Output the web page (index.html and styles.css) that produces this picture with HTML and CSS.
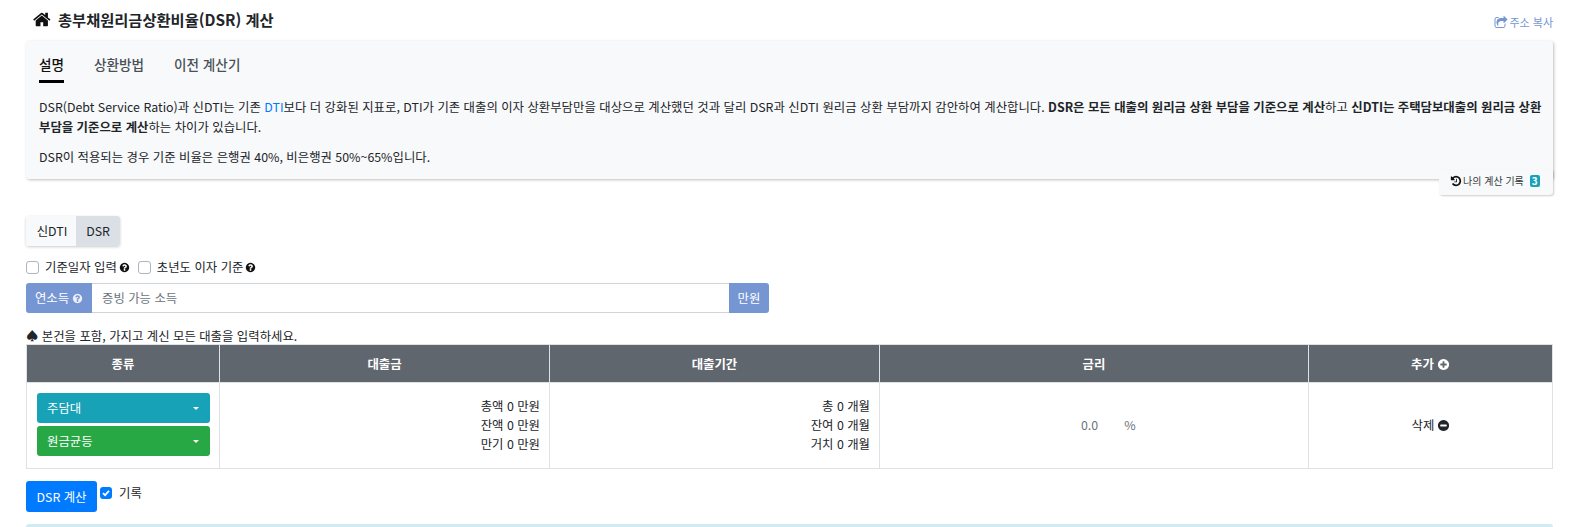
FILE: index.html
```html
<!DOCTYPE html>
<html lang="ko">
<head>
<meta charset="utf-8">
<title>총부채원리금상환비율(DSR) 계산</title>
<link rel="stylesheet" href="styles.css">
</head>
<body>
<svg class="defs" width="0" height="0" aria-hidden="true">
<symbol id="i-home" viewBox="0 0 1792 1792"><path d="M1408 992v480q0 26-19 45t-45 19h-384v-384h-256v384h-384q-26 0-45-19t-19-45v-480q0-1 .5-3t.5-3l575-474 575 474q1 2 1 6zm223-69l-62 74q-8 9-21 11h-3q-13 0-21-7l-692-577-692 577q-12 8-24 7-13-2-21-11l-62-74q-8-10-7-23.500t11-21.500l719-599q32-26 76-26t76 26l244 204v-195q0-14 9-23t23-9h192q14 0 23 9t9 23v408l219 182q10 8 11 21.500t-7 23.500z"/></symbol>
<symbol id="i-help" viewBox="0 0 1792 1792"><path d="M1024 1376v-192q0-14-9-23t-23-9h-192q-14 0-23 9t-9 23v192q0 14 9 23t23 9h192q14 0 23-9t9-23zm256-672q0-88-55.500-163t-138.500-116-170-41q-243 0-371 213-15 24 8 42l132 100q7 6 19 6 16 0 25-12 53-68 86-92 34-24 86-24 48 0 85.500 26t37.500 59q0 38-20 61t-68 45q-63 28-115.500 86.500t-52.500 125.500v36q0 14 9 23t23 9h192q14 0 23-9t9-23q0-19 21.500-49.500t54.500-49.500q32-18 49-28.500t46-35 44.500-48 28-60.500 12.500-81zm384 192q0 209-103 385.500t-279.500 279.500-385.500 103-385.500-103-279.500-279.500-103-385.500 103-385.500 279.500-279.500 385.500-103 385.500 103 279.500 279.500 103 385.500z"/></symbol>
<symbol id="i-plus" viewBox="0 0 1792 1792"><path d="M1344 960v-128q0-26-19-45t-45-19h-256v-256q0-26-19-45t-45-19h-128q-26 0-45 19t-19 45v256h-256q-26 0-45 19t-19 45v128q0 26 19 45t45 19h256v256q0 26 19 45t45 19h128q26 0 45-19t19-45v-256h256q26 0 45-19t19-45zm320-64q0 209-103 385.500t-279.500 279.500-385.500 103-385.500-103-279.500-279.500-103-385.500 103-385.500 279.500-279.500 385.500-103 385.500 103 279.500 279.500 103 385.500z"/></symbol>
<symbol id="i-minus" viewBox="0 0 1792 1792"><path d="M1344 960v-128q0-26-19-45t-45-19h-768q-26 0-45 19t-19 45v128q0 26 19 45t45 19h768q26 0 45-19t19-45zm320-64q0 209-103 385.500t-279.500 279.500-385.500 103-385.500-103-279.500-279.500-103-385.500 103-385.500 279.500-279.500 385.500-103 385.500 103 279.500 279.500 103 385.500z"/></symbol>
<symbol id="i-history" viewBox="0 0 1792 1792"><path d="M1664 896q0 156-61 298t-164 245-245 164-298 61q-172 0-327-72.500t-264-204.500q-7-10-6.500-22.500t8.500-20.500l137-138q10-9 25-9 16 2 23 12 73 95 179 147t225 52q104 0 198.500-40.500t163.500-109.500 109.500-163.500 40.500-198.500-40.500-198.500-109.500-163.500-163.500-109.500-198.500-40.500q-98 0-188 35.500t-160 101.500l137 138q31 30 14 69-17 40-59 40h-448q-26 0-45-19t-19-45v-448q0-42 40-59 39-17 69 14l130 129q107-101 244.500-156.500t284.500-55.500q156 0 298 61t245 164 164 245 61 298zm-640-288v448q0 14-9 23t-23 9h-320q-14 0-23-9t-9-23v-64q0-14 9-23t23-9h224v-352q0-14 9-23t23-9h64q14 0 23 9t9 23z"/></symbol>
<symbol id="i-share" viewBox="0 0 1792 1792"><path d="M1472 989v259q0 119-84.500 203.500t-203.500 84.500h-832q-119 0-203.500-84.500t-84.500-203.500v-832q0-119 84.500-203.500t203.500-84.500h255q13 0 22.500 9.500t9.500 22.500q0 27-26 32-77 26-133 60-10 4-16 4h-112q-66 0-113 47t-47 113v832q0 66 47 113t113 47h832q66 0 113-47t47-113v-214q0-19 18-29 28-13 54-37 16-16 35-8 21 9 21 29zm237-496l-384 384q-18 19-45 19-12 0-25-5-39-17-39-59v-192h-160q-323 0-438 131-119 137-74 473 3 23-20 34-8 2-12 2-16 0-26-13-10-14-21-31t-39.500-68.500-49.500-99.500-38.500-114-17.500-122q0-49 3.500-91t14-90 28-88 47-81.500 68.500-74 94.500-61.500 124.500-48.500 159.500-30.500 196.500-11h160v-192q0-42 39-59 13-5 25-5 26 0 45 19l384 384q19 19 19 45t-19 45z"/></symbol>
</svg>
<main class="page">
  <header class="title-row">
    <h1 class="title"><svg class="icon icon-home"><use href="#i-home"/></svg>총부채원리금상환비율(DSR) 계산</h1>
    <a class="copy" href="#"><svg class="icon icon-share"><use href="#i-share"/></svg>주소 복사</a>
  </header>

  <section class="card">
    <nav class="tabs">
      <a class="tab active" href="#">설명</a>
      <a class="tab" href="#">상환방법</a>
      <a class="tab" href="#">이전 계산기</a>
    </nav>
    <p class="para para-first">DSR(Debt Service Ratio)과 신DTI는 기존 <a class="link" href="#">DTI</a>보다 더 강화된 지표로, DTI가 기존 대출의 이자 상환부담만을 대상으로 계산했던 것과 달리 DSR과 신DTI 원리금 상환 부담까지 감안하여 계산합니다. <b>DSR은 모든 대출의 원리금 상환 부담을 기준으로 계산</b>하고 <b>신DTI는 주택담보대출의 원리금 상환 부담을 기준으로 계산</b>하는 차이가 있습니다.</p>
    <p class="para">DSR이 적용되는 경우 기준 비율은 은행권 40%, 비은행권 50%~65%입니다.</p>
    <a class="history" href="#"><svg class="icon icon-history"><use href="#i-history"/></svg>나의 계산 기록<span class="badge">3</span></a>
  </section>

  <div class="toggle">
    <button class="toggle-btn" type="button">신DTI</button>
    <button class="toggle-btn on" type="button">DSR</button>
  </div>

  <div class="checks">
    <label class="check"><span class="box"></span>기준일자 입력<svg class="icon icon-help"><use href="#i-help"/></svg></label>
    <label class="check"><span class="box"></span>초년도 이자 기준<svg class="icon icon-help"><use href="#i-help"/></svg></label>
  </div>

  <div class="input-group">
    <span class="addon addon-left">연소득<svg class="icon icon-help-light"><use href="#i-help"/></svg></span>
    <input class="field" type="text" placeholder="증빙 가능 소득">
    <span class="addon addon-right">만원</span>
  </div>

  <p class="note">♠ 본건을 포함, 가지고 계신 모든 대출을 입력하세요.</p>

  <table class="loans">
    <colgroup>
      <col class="c1"><col class="c2"><col class="c3"><col class="c4"><col class="c5">
    </colgroup>
    <thead>
      <tr>
        <th>종류</th>
        <th>대출금</th>
        <th>대출기간</th>
        <th>금리</th>
        <th>추가<svg class="icon icon-round"><use href="#i-plus"/></svg></th>
      </tr>
    </thead>
    <tbody>
      <tr>
        <td class="cell-kind">
          <button class="select teal" type="button">주담대<i class="caret"></i></button>
          <button class="select green" type="button">원금균등<i class="caret"></i></button>
        </td>
        <td class="cell-num">총액 0 만원<br>잔액 0 만원<br>만기 0 만원</td>
        <td class="cell-num">총 0 개월<br>잔여 0 개월<br>거치 0 개월</td>
        <td class="cell-rate"><span class="rate"><span class="rate-val">0.0</span><span>%</span></span></td>
        <td class="cell-del">삭제<svg class="icon icon-round"><use href="#i-minus"/></svg></td>
      </tr>
    </tbody>
  </table>

  <div class="actions">
    <button class="primary" type="button">DSR 계산</button>
    <label class="record"><span class="box-on"><svg viewBox="0 0 12 12"><path d="M3 6.200 5.100 8.200 9 3.900" fill="none" stroke="#fff" stroke-width="1.800"/></svg></span>기록</label>
  </div>

  <div class="alert"></div>
</main>
</body>
</html>
```
FILE: styles.css
```css
* { box-sizing: border-box; }
html, body { height: 527px; overflow: hidden; }
body {
  margin: 0;
  background: #fff;
  color: #212529;
  font-family: "Noto Sans CJK KR", "Noto Sans", sans-serif;
  font-size: 12.380px;
  line-height: 20px;
}
.defs { position: absolute; }
.page { width: 1527px; margin-left: 26px; }
.icon { display: inline-block; fill: currentColor; vertical-align: -2px; }

.title-row { display: flex; justify-content: space-between; height: 41px; }
.title { margin: 8px 0 0 7px; font-size: 15.300px; line-height: 22px; font-weight: 700; color: #212529; }
.icon-home { width: 19px; height: 19px; margin-right: 6px; vertical-align: -3px; color: #111; }
.copy { margin-top: 12px; color: #7596d3; font-size: 11px; line-height: 20px; text-decoration: none; }
.icon-share { width: 14px; height: 14px; margin-right: 1px; vertical-align: -3px; }

.card {
  position: relative;
  height: 138px;
  padding: 0 8px 0 13px;
  background: #f8f9fa;
  border-radius: 3px;
  box-shadow: 1px 1px 3px rgba(0, 0, 0, .25);
}
.tabs { display: flex; gap: 30px; height: 42px; padding-top: 12px; }
.tab { height: 30px; font-size: 13.600px; line-height: 22px; font-weight: 500; color: #495057; text-decoration: none; }
.tab.active { color: #111; border-bottom: 3px solid #000; }
.para { margin: 0 0 10px; line-height: 19.800px; word-break: keep-all; }
.para-first { padding-top: 15px; }
.link { color: #007bff; text-decoration: none; }
b { font-weight: 700; }
.history {
  position: absolute;
  right: 0;
  bottom: -16px;
  display: flex;
  align-items: center;
  width: 114px;
  height: 25px;
  padding: 0 0 3px 11px;
  background: #f8f9fa;
  border-radius: 0 0 3px 3px;
  box-shadow: 1px 1px 2px rgba(0, 0, 0, .2);
  color: #343a40;
  font-size: 10px;
  text-decoration: none;
}
.icon-history { width: 12px; height: 12px; margin-right: 1px; color: #111; }
.badge {
  width: 10px;
  height: 12px;
  margin-left: 6px;
  border-radius: 2px;
  background: #17a2b8;
  color: #fff;
  font-size: 10px;
  line-height: 12px;
  font-weight: 700;
  text-align: center;
}

.toggle { display: inline-flex; margin-top: 37px; border-radius: 3px; box-shadow: 0 1px 3px rgba(0, 0, 0, .2); vertical-align: top; }
.toggle-btn {
  height: 30px;
  padding: 0 0 0 2px;
  border: 0;
  background: #f8f9fa;
  color: #212529;
  font: inherit;
  width: 50px;
  border-radius: 3px 0 0 3px;
}
.toggle-btn.on { width: 44px; padding: 0; background: #dae0e5; border-radius: 0 3px 3px 0; }

.checks { display: flex; gap: 8px; height: 20px; margin-top: 11px; align-items: center; }
.check { display: flex; align-items: center; }
.box { width: 13px; height: 13px; margin-right: 6px; border: 1px solid #adb5bd; border-radius: 3px; background: #fff; }
.icon-help { width: 11px; height: 11px; margin-left: 2px; color: #111; }

.input-group { display: flex; width: 743px; height: 30px; margin-top: 6px; }
.addon { display: flex; align-items: center; justify-content: center; background: #7596d3; color: #fff; }
.addon-left { width: 66px; border-radius: 3px 0 0 3px; }
.addon-right { width: 40px; border-radius: 0 3px 3px 0; }
.icon-help-light { width: 11px; height: 11px; margin-left: 3px; color: #fff; opacity: .85; }
.field {
  flex: 1;
  min-width: 0;
  padding: 0 10px;
  border: 1px solid #ced4da;
  border-left: 0;
  border-right: 0;
  font: inherit;
  color: #495057;
  outline: 0;
}
.field::placeholder { color: #6c757d; opacity: 1; }

.note { margin: 13px 0 0; height: 18px; line-height: 20px; }

.loans { width: 1526px; border-collapse: collapse; table-layout: fixed; }
.c1 { width: 193px; }
.c2 { width: 330px; }
.c3 { width: 330px; }
.c4 { width: 429px; }
.c5 { width: 244px; }
.loans th {
  height: 38px;
  padding: 0;
  border: 1px solid #dee2e6;
  background: #5f666e;
  color: #fff;
  font-weight: 700;
  text-align: center;
}
.loans td { height: 86px; padding: 0 9px 0 10px; border: 1px solid #dee2e6; line-height: 19px; }
.cell-kind { vertical-align: top; }
.loans td.cell-kind { padding-top: 10px; }
.select {
  display: flex;
  align-items: center;
  justify-content: space-between;
  width: 173px;
  height: 30px;
  margin-bottom: 3px;
  padding: 0 11px 0 10px;
  border: 0;
  border-radius: 3px;
  color: #fff;
  font: inherit;
}
.teal { background: #17a2b8; }
.green { background: #28a745; }
.caret { width: 0; height: 0; border: 3px solid transparent; border-top-color: #fff; border-bottom: 0; }
.cell-num { text-align: right; }
.cell-rate { text-align: left; color: #6c757d; }
.loans td.cell-rate { padding-left: 201px; }
.rate { display: inline-flex; gap: 26px; }
.cell-del { text-align: center; }
.icon-round { width: 13px; height: 13px; margin-left: 3px; }

.actions { display: flex; align-items: flex-start; margin-top: 12px; }
.primary {
  width: 71px;
  height: 31px;
  padding: 0;
  border: 0;
  border-radius: 3px;
  background: #007bff;
  color: #fff;
  font: inherit;
}
.record { display: flex; align-items: center; height: 20px; margin: 2px 0 0 3px; }
.box-on { width: 12px; height: 12px; margin-right: 7px; border-radius: 3px; background: #007bff; }
.box-on svg { display: block; }

.alert { height: 20px; margin-top: 12px; background: #d1ecf1; border-radius: 3px 3px 0 0; }
```
